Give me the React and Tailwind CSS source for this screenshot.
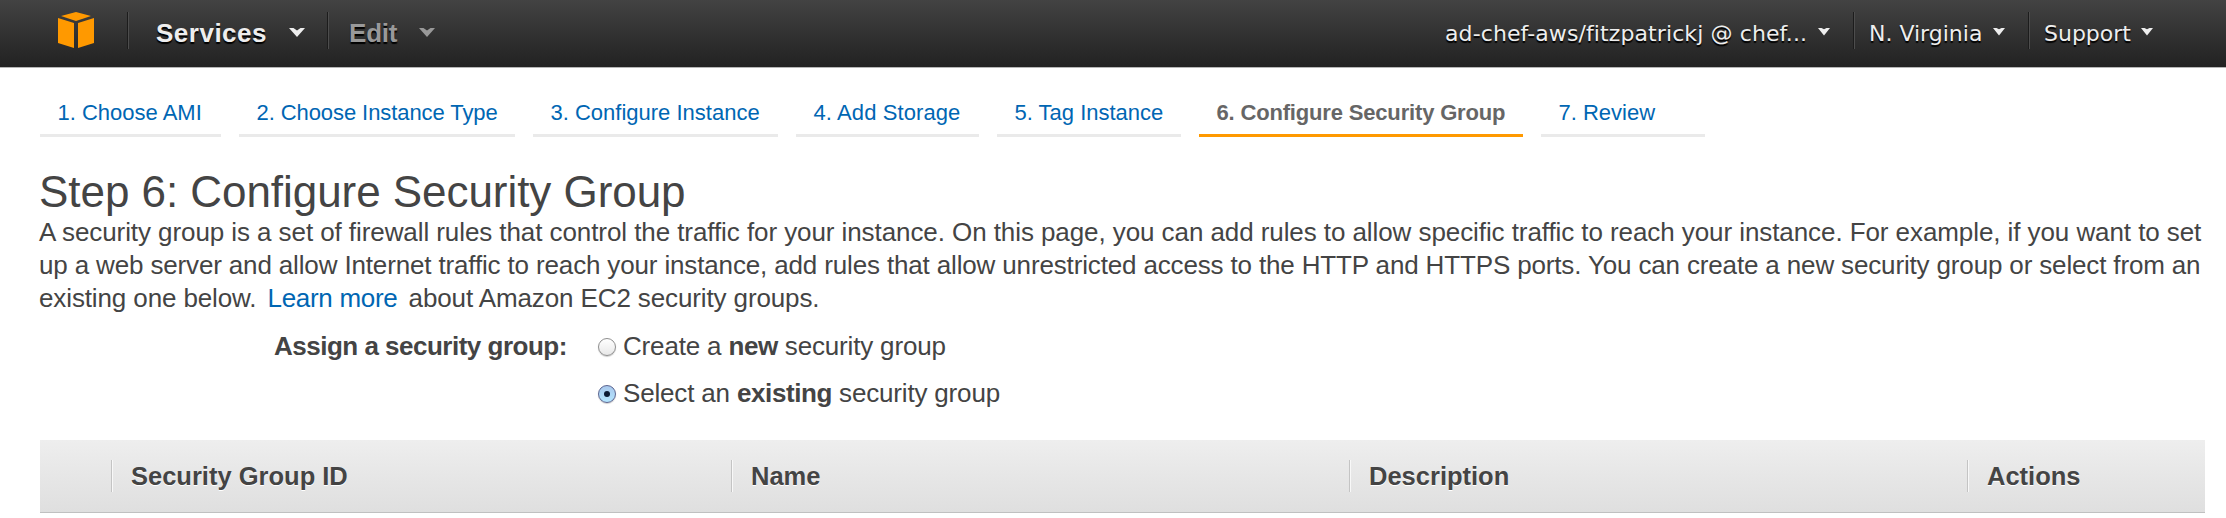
const tabs = [
  ['1. Choose AMI', 'w-[181px]'],
  ['2. Choose Instance Type', 'w-[276px] tracking-[-0.08px]'],
  ['3. Configure Instance', 'w-[245px]'],
  ['4. Add Storage', 'w-[183px] tracking-[0.1px]'],
  ['5. Tag Instance', 'w-[184px]'],
  ['6. Configure Security Group', 'w-[324px] tracking-[-0.17px]'],
  ['7. Review', 'w-[164px]'],
];

function Caret({ className = '' }) {
  return (
    <svg className={`shrink-0 ${className}`} width="16" height="9" viewBox="0 0 16 9">
      <path d="M0 0H4.5L8 2.5L11.500 0H16L8 9Z" fill="currentColor" />
    </svg>
  );
}

function SmallCaret() {
  return (
    <svg className="-mt-[3px] shrink-0" width="12" height="8" viewBox="0 0 12 8">
      <path d="M0 0H3.500L6 1.200L8.500 0H12L6 7.500Z" fill="currentColor" />
    </svg>
  );
}

function Divider({ className = '' }) {
  return <div className={`h-[37px] w-[2px] shrink-0 border-l border-l-[#1c1c1c] bg-[#4d4d4d] ${className}`} />;
}

function Header() {
  return (
    <header className="flex h-[68px] items-start border-b border-[#b5b5b5] bg-linear-to-b from-[#434343] to-[#222222] pt-3 whitespace-nowrap [text-shadow:0_2px_1px_#000]">
      <svg className="ml-[58px] shrink-0" width="36" height="36" viewBox="0 0 36 36">
        <path d="M18 0L33 4L18 9L3 4ZM0 6L16 11V36L0 31ZM36 6L20 11V36L36 31Z" fill="#ff9900" />
      </svg>
      <Divider className="ml-[33px]" />
      <div className="ml-[27px] flex h-[42px] w-[172px] items-center text-[26px] font-bold text-[#eeeeee]">
        <span className="w-[133px] tracking-[0.5px]">Services</span>
        <Caret className="-mt-px" />
      </div>
      <Divider className="-ml-px" />
      <div className="ml-5 flex h-[42px] items-center text-[26px] font-bold text-[#999999]">
        <span className="w-[70px] tracking-[-0.2px]">Edit</span>
        <Caret className="-mt-px" />
      </div>
      <div className="ml-auto flex h-10 items-start font-['DejaVu_Sans',sans-serif] text-[22px] text-[#eeeeee]">
        <div className="flex h-[42px] w-[408px] items-center">
          <span className="w-[373px] tracking-[0.1px]">ad-chef-aws/fitzpatrickj @ chef...</span>
          <SmallCaret />
        </div>
        <Divider />
        <div className="flex h-[42px] w-[173px] items-center pl-[14px]">
          <span className="w-[124px]">N. Virginia</span>
          <SmallCaret />
        </div>
        <Divider />
        <div className="flex h-[42px] w-[196px] items-center pl-[14px]">
          <span className="w-[97px]">Support</span>
          <SmallCaret />
        </div>
      </div>
    </header>
  );
}

function Radio({ checked }) {
  return (
    <span
      className={
        checked
          ? 'flex size-[18px] items-center justify-center rounded-full border border-[#5a6490] bg-linear-to-b from-[#a9c8ec] to-[#b4e6ff] shadow-[0_1px_1px_#0003]'
          : 'flex size-[18px] items-center justify-center rounded-full border border-[#8e8e8e] bg-linear-to-b from-white to-[#e8e8e8] shadow-[0_1px_1px_#0003]'
      }
    >
      {checked && <span className="size-[6px] rounded-full bg-[#0b1a33]" />}
    </span>
  );
}

function HeadCell({ className, children }) {
  return (
    <div className={`flex h-8 items-center border-l border-[#c4c4c4] pl-[19px] shadow-[inset_1px_0_0_#f8f8f8] ${className}`}>
      {children}
    </div>
  );
}

export default function App() {
  return (
    <div className="h-[518px] w-[2226px] overflow-hidden bg-white font-['Liberation_Sans',Arial,sans-serif] text-[#444444]">
      <Header />
      <nav className="ml-10 flex h-[69px] gap-[18px] text-[22px] whitespace-nowrap">
        {tabs.map(([label, width], i) => (
          <div
            key={label}
            className={`${width} shrink-0 border-b-[3px] pt-[29px] pl-[17.5px] leading-8 ${
              i === 5 ? 'border-[#ff9900] font-bold text-[#666666]' : 'border-[#eaeaea] text-[#0066b3]'
            }`}
          >
            {label}
          </div>
        ))}
      </nav>
      <main className="pl-[39px] text-[26px] leading-[33px] whitespace-nowrap">
        <h1 className="pt-[30px] text-[44px] leading-[49px] tracking-[-0.05px]">Step 6: Configure Security Group</h1>
        <div>
          <p className="tracking-[-0.08px]">A security group is a set of firewall rules that control the traffic for your instance. On this page, you can add rules to allow specific traffic to reach your instance. For example, if you want to set</p>
          <p className="tracking-[-0.15px]">up a web server and allow Internet traffic to reach your instance, add rules that allow unrestricted access to the HTTP and HTTPS ports. You can create a new security group or select from an</p>
          <p className="tracking-[-0.12px]">
            existing one below. <a className="mx-1 tracking-[-0.3px] text-[#0066b3]">Learn more</a> about Amazon EC2 security groups.
          </p>
        </div>
        <div className="mt-[15px] flex">
          <div className="w-[559px] pl-[235px] font-bold tracking-[-0.5px]">Assign a security group:</div>
          <div className="flex flex-col gap-[14px]">
            <label className="flex items-center gap-[7px]">
              <Radio />
              <span className="tracking-[-0.17px]">Create a <b className="tracking-[-0.4px]">new</b> security group</span>
            </label>
            <label className="flex items-center gap-[7px]">
              <Radio checked />
              <span className="tracking-[-0.17px]">Select an <b className="tracking-[-0.4px]">existing</b> security group</span>
            </label>
          </div>
        </div>
      </main>
      <section className="mt-[30px] ml-10 flex h-[73px] w-[2165px] items-center border-b border-[#c0c0c0] bg-linear-to-b from-[#eeeeee] to-[#dfdfdf] pl-[71px] text-[25.5px] font-bold [text-shadow:0_1px_0_#fff]">
        <HeadCell className="w-[620px]">Security Group ID</HeadCell>
        <HeadCell className="w-[618px]">Name</HeadCell>
        <HeadCell className="w-[618px]">Description</HeadCell>
        <HeadCell className="w-[238px]">Actions</HeadCell>
      </section>
    </div>
  );
}
